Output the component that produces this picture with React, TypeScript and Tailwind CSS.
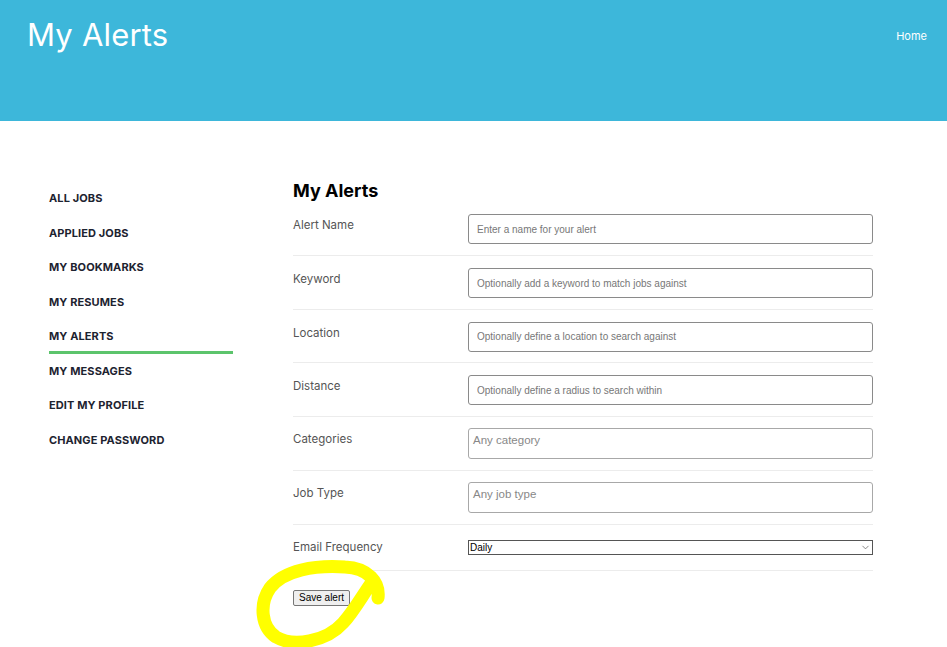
import { ChevronDown } from "lucide-react";

const navItems = [
  "All Jobs",
  "Applied Jobs",
  "My Bookmarks",
  "My Resumes",
  "My Alerts",
  "My Messages",
  "Edit My Profile",
  "Change Password",
];

const textFields = [
  { label: "Alert Name", placeholder: "Enter a name for your alert" },
  { label: "Keyword", placeholder: "Optionally add a keyword to match jobs against" },
  { label: "Location", placeholder: "Optionally define a location to search against" },
  { label: "Distance", placeholder: "Optionally define a radius to search within" },
];

const arial = { fontFamily: "'Liberation Sans', Arial, sans-serif" };

export default function App() {
  return (
    <div className="min-h-screen bg-white" style={{ fontFamily: "Inter, 'Noto Sans', sans-serif" }}>
      <header className="h-[121px] bg-[#3db7da] flex justify-between pl-[27px] pr-[20px]">
        <h1 className="text-[31px] leading-[40px] text-white mt-[15px] tracking-[0.2px]">My Alerts</h1>
        <a href="#" className="text-[11px] text-white mt-[28px]">Home</a>
      </header>

      <div className="flex pl-[49px] pt-[58px] relative">
        <nav className="w-[184px] pt-[2px]">
          {navItems.map((item) => (
            <div
              key={item}
              className={
                "h-[34.5px] flex items-center text-[11px] font-bold uppercase text-[#1d2330] tracking-[0.1px] " +
                (item === "My Alerts" ? "border-b-[3px] border-[#5cc46c] pt-[3px]" : "")
              }
            >
              {item}
            </div>
          ))}
        </nav>

        <main className="ml-[60px] w-[580px]">
          <h2 className="text-[18px] font-bold text-black leading-[24px]">My Alerts</h2>
          <div className="mt-[11px]">
            {textFields.map((f) => (
              <div key={f.label} className="flex pb-[10.5px] pt-[12px] first:pt-0 first:pb-[11px] border-b border-[#ececec]">
                <label className="w-[175px] text-[11.5px] text-[#555] pt-[3px]">{f.label}</label>
                <input
                  placeholder={f.placeholder}
                  className="flex-1 h-[30px] border border-[#8a8a8a] rounded-[3px] px-[8px] text-[10px] placeholder:text-[#777] outline-none"
                  style={arial}
                />
              </div>
            ))}
            {["Categories", "Job Type"].map((label) => (
              <div key={label} className="flex pb-[11px] pt-[11px] border-b border-[#ececec]">
                <label className="w-[175px] text-[11.5px] text-[#555] pt-[3px]">{label}</label>
                <div
                  className="flex-1 h-[31px] border border-[#a8a8a8] rounded-[3px] px-[4px] pt-[3px] text-[11.5px] text-[#888]"
                  style={arial}
                >
                  {label === "Categories" ? "Any category" : "Any job type"}
                </div>
              </div>
            ))}
            <div className="flex items-center h-[46px] border-b border-[#ececec]">
              <label className="w-[175px] text-[11.5px] leading-[15px] text-[#555]">Email Frequency</label>
              <div className="flex-1 relative h-[15px]">
                <select
                  className="block w-full h-[15px] border border-[#555] appearance-none bg-white text-[10px] text-black pl-[1px] py-0 leading-[13px] outline-none"
                  style={arial}
                >
                  <option>Daily</option>
                  <option>Weekly</option>
                </select>
                <ChevronDown className="absolute right-[2px] top-[2px] w-[11px] h-[11px] text-[#555] pointer-events-none" strokeWidth={1.5} />
              </div>
            </div>
          </div>
          <button
            className="mt-[19px] h-[16px] px-[5px] text-[10px] text-black bg-[#efefef] border border-[#767676] rounded-[2px] leading-[14px]"
            style={arial}
          >
            Save alert
          </button>
        </main>

        <svg
          className="absolute left-[250px] top-[439px] pointer-events-none"
          width="150"
          height="90"
          viewBox="0 0 150 90"
          fill="none"
        >
          <path
            d="M128 38 C 130 22, 118 8, 95 7 C 65 5, 34 10, 20 28 C 9 44, 11 67, 26 77 C 43 87, 76 82, 93 63 C 104 51, 112 36, 122 22"
            stroke="#ffff00"
            strokeWidth="13"
            strokeLinecap="round"
            strokeLinejoin="round"
          />
        </svg>
      </div>
    </div>
  );
}
